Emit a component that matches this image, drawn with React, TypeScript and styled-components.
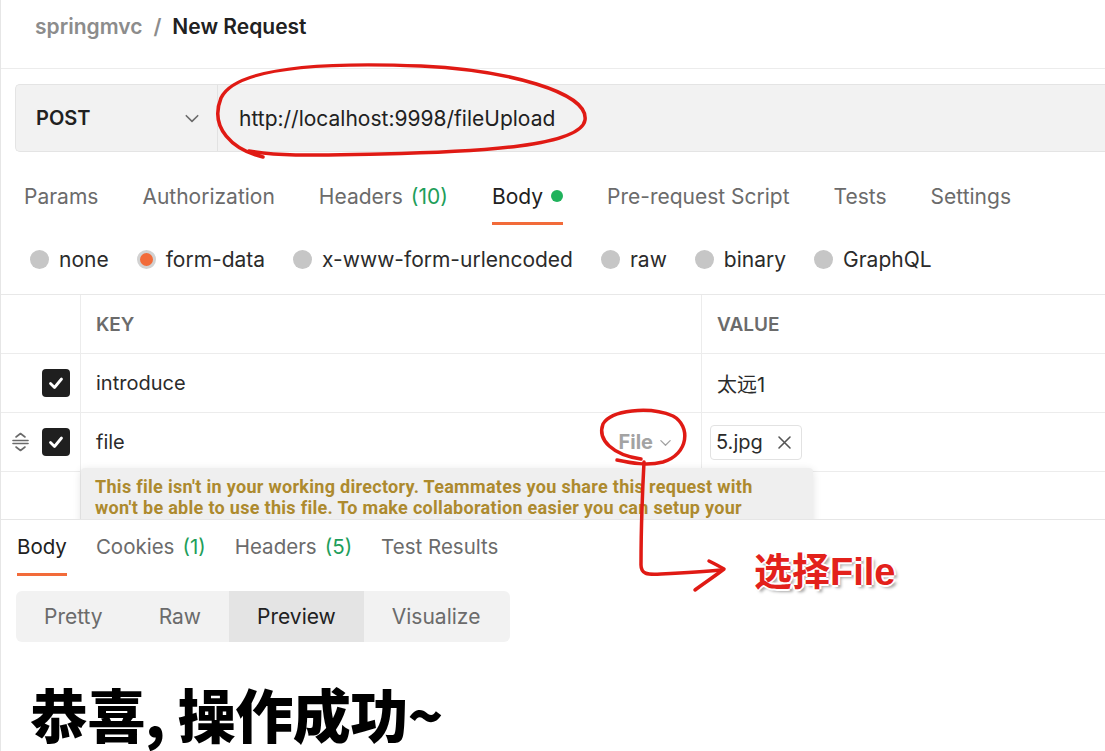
import React from 'react';
import styled, { createGlobalStyle } from 'styled-components';

const GlobalStyle = createGlobalStyle`
    html, body {
        margin: 0;
        padding: 0;
        background: #fff;
    }
    body {
        font-family: Inter, "Noto Sans", "Noto Sans CJK SC", sans-serif;
        color: #212121;
    }
`;

const Page = styled.div`
    position: relative;
    width: 1105px;
    height: 751px;
    overflow: hidden;
    border-left: 1px solid #e6e6e6;
    box-sizing: border-box;
`;

const Header = styled.div`
    height: 69px;
    box-sizing: border-box;
    padding: 13px 0 0 34px;
    border-bottom: 1px solid #ececec;
    display: flex;
    gap: 11px;
    font-size: 21px;
    font-weight: 600;
    line-height: 28px;
`;

const Crumb = styled.span<{ $dim?: boolean }>`
    color: ${p => (p.$dim ? '#8c8c8c' : '#212121')};
`;

const UrlBar = styled.div`
    margin: 15px 0 0 14px;
    height: 68px;
    box-sizing: border-box;
    background: #f2f2f2;
    border: 1px solid #e4e4e4;
    border-right: none;
    border-radius: 5px 0 0 5px;
    display: flex;
`;

const Method = styled.div`
    width: 202px;
    box-sizing: border-box;
    padding: 0 17px 0 20px;
    border-right: 1px solid #e2e2e2;
    display: flex;
    align-items: center;
    justify-content: space-between;
    font-size: 20px;
    font-weight: 600;
    color: #212121;
`;

const Url = styled.div`
    padding-left: 21px;
    display: flex;
    align-items: center;
    font-size: 21px;
    color: #212121;
`;

const TabRow = styled.div`
    margin-top: 18px;
    padding-left: 23px;
    display: flex;
    gap: 44px;
`;

const Tab = styled.div<{ $active?: boolean; $size?: number; $height?: number }>`
    height: ${p => p.$height ?? 55}px;
    box-sizing: border-box;
    display: flex;
    align-items: center;
    gap: 8px;
    font-size: ${p => p.$size ?? 21}px;
    color: ${p => (p.$active ? '#212121' : '#6b6b6b')};
    border-bottom: 3px solid ${p => (p.$active ? '#f26b3a' : 'transparent')};
`;

const Count = styled.span`
    color: #1e9e5a;
`;

const Dot = styled.span`
    width: 12px;
    height: 12px;
    border-radius: 50%;
    background: #20b25c;
`;

const RadioRow = styled.div`
    height: 69px;
    padding-left: 29px;
    display: flex;
    align-items: center;
    gap: 28px;
`;

const RadioItem = styled.label`
    display: flex;
    align-items: center;
    gap: 10px;
    font-size: 21px;
    color: #2b2b2b;
`;

const Radio = styled.span<{ $on?: boolean }>`
    width: 19px;
    height: 19px;
    border-radius: 50%;
    box-sizing: border-box;
    background: ${p => (p.$on ? '#f26b3a' : '#c6c6c6')};
    border: ${p => (p.$on ? '3px solid #d2d2d2' : 'none')};
`;

const Table = styled.div`
    height: 224px;
    overflow: hidden;
    border-top: 1px solid #e8e8e8;
`;

const Row = styled.div<{ $height?: number }>`
    position: relative;
    display: grid;
    grid-template-columns: 79px 621px 1fr;
    height: ${p => p.$height ?? 58}px;
    border-bottom: 1px solid #ececec;
`;

const Cell = styled.div<{ $first?: boolean }>`
    display: flex;
    align-items: center;
    box-sizing: border-box;
    border-left: ${p => (p.$first ? 'none' : '1px solid #ececec')};
    padding-left: 15px;
    font-size: 20px;
    color: #2b2b2b;
`;

const HandleCell = styled.div`
    display: flex;
    align-items: center;
    justify-content: space-between;
    padding: 0 10px 0 10px;
`;

const HeadCell = styled(Cell)`
    font-size: 19px;
    font-weight: 600;
    color: #6b6b6b;
`;

const KeyCell = styled(Cell)`
    justify-content: space-between;
    padding-right: 29px;
`;

const TypePick = styled.span`
    display: flex;
    align-items: center;
    gap: 6px;
    font-size: 20px;
    font-weight: 700;
    color: #a3a3a3;
`;

const Chip = styled.span`
    display: inline-flex;
    align-items: center;
    gap: 14px;
    margin-left: -7px;
    height: 33px;
    padding: 0 9px 0 5px;
    border: 1px solid #e2e2e2;
    border-radius: 4px;
    font-size: 20px;
    color: #2b2b2b;
`;

const CheckBox = styled.span`
    width: 28px;
    height: 28px;
    border-radius: 4px;
    background: #1f1f1f;
    display: flex;
    align-items: center;
    justify-content: center;
`;

const Tooltip = styled.div`
    position: absolute;
    left: 80px;
    top: 55px;
    width: 732px;
    height: 80px;
    box-sizing: border-box;
    padding: 8px 14px;
    background: #efefef;
    box-shadow: 0 2px 8px rgba(0, 0, 0, 0.12);
    border-radius: 4px;
    font-family: Roboto, "Liberation Sans", sans-serif;
    font-size: 18px;
    font-weight: 700;
    letter-spacing: 0.3px;
    line-height: 21px;
    white-space: nowrap;
    color: #ad8a2e;
    z-index: 2;
`;

const Response = styled.div`
    position: relative;
    z-index: 3;
    background: #fff;
    border-top: 1px solid #e6e6e6;
`;

const RespTabs = styled.div`
    padding-left: 16px;
    display: flex;
    gap: 29px;
`;

const Segmented = styled.div`
    margin: 15px 0 0 15px;
    width: 494px;
    height: 51px;
    border-radius: 6px;
    background: #f2f2f2;
    display: flex;
    overflow: hidden;
`;

const Segment = styled.div<{ $active?: boolean }>`
    padding: 0 28px;
    display: flex;
    align-items: center;
    font-size: 21px;
    color: ${p => (p.$active ? '#212121' : '#6b6b6b')};
    background: ${p => (p.$active ? '#e4e4e4' : 'transparent')};
`;

const Heading = styled.h1`
    margin: 41px 0 0 29px;
    font-family: "Noto Sans CJK SC", sans-serif;
    font-size: 58px;
    font-weight: 900;
    line-height: 60px;
    color: #000;
    letter-spacing: -0.5px;
`;

const Marks = styled.svg`
    position: absolute;
    left: 0;
    top: 0;
    pointer-events: none;
    z-index: 10;
`;

const Note = styled.span`
    position: absolute;
    left: 753px;
    top: 541px;
    z-index: 11;
    font-family: "Noto Sans CJK SC", "Liberation Sans", sans-serif;
    font-size: 38px;
    font-weight: 700;
    color: #e3211b;
    white-space: nowrap;
    text-shadow: -2px 0 #fff, 2px 0 #fff, 0 -2px #fff, 0 2px #fff, 3px 3px 3px rgba(0, 0, 0, 0.35);
`;

const NoteLatin = styled.span`
    font-family: "Liberation Sans", Arial, sans-serif;
    font-weight: 700;
`;

const Check = () => (
    <svg width="18" height="18" viewBox="0 0 18 18">
        <path d="M3.5 9.5 L7.5 13.5 L14.5 5" fill="none" stroke="#fff" strokeWidth="2.8" strokeLinecap="round" strokeLinejoin="round" />
    </svg>
);

const Chevron = ({ size = 14, color = '#6b6b6b' }: { size?: number; color?: string }) => (
    <svg width={size} height={size} viewBox="0 0 14 14">
        <path d="M2 5 L7 10 L12 5" fill="none" stroke={color} strokeWidth="1.4" strokeLinecap="round" strokeLinejoin="round" />
    </svg>
);

const Handle = () => (
    <svg width="19" height="22" viewBox="0 0 19 22">
        <g fill="none" stroke="#6b6b6b" strokeWidth="1.6" strokeLinecap="round" strokeLinejoin="round">
            <path d="M5 6 L9.5 2.5 L14 6" />
            <path d="M2 9.5 H17" />
            <path d="M2 12.5 H17" />
            <path d="M5 16 L9.5 19.5 L14 16" />
        </g>
    </svg>
);

const Cross = () => (
    <svg width="15" height="15" viewBox="0 0 15 15">
        <path d="M2 2 L13 13 M13 2 L2 13" stroke="#555" strokeWidth="1.6" strokeLinecap="round" />
    </svg>
);

const App: React.FC = () => {
    const tabs = ['Params', 'Authorization', 'Headers', 'Body', 'Pre-request Script', 'Tests', 'Settings'];
    const bodyTypes = ['none', 'form-data', 'x-www-form-urlencoded', 'raw', 'binary', 'GraphQL'];
    const views = ['Pretty', 'Raw', 'Preview', 'Visualize'];

    return (
        <Page>
            <GlobalStyle />
            <Header>
                <Crumb $dim>springmvc</Crumb>
                <Crumb $dim>/</Crumb>
                <Crumb>New Request</Crumb>
            </Header>

            <UrlBar>
                <Method>
                    POST
                    <Chevron size={16} />
                </Method>
                <Url>http://localhost:9998/fileUpload</Url>
            </UrlBar>

            <TabRow>
                {tabs.map(t => (
                    <Tab key={t} $active={t === 'Body'}>
                        {t}
                        {t === 'Headers' && <Count>(10)</Count>}
                        {t === 'Body' && <Dot />}
                    </Tab>
                ))}
            </TabRow>

            <RadioRow>
                {bodyTypes.map(b => (
                    <RadioItem key={b}>
                        <Radio $on={b === 'form-data'} />
                        {b}
                    </RadioItem>
                ))}
            </RadioRow>

            <Table>
                <Row>
                    <Cell $first />
                    <HeadCell>KEY</HeadCell>
                    <HeadCell>VALUE</HeadCell>
                </Row>
                <Row>
                    <HandleCell>
                        <span />
                        <CheckBox><Check /></CheckBox>
                    </HandleCell>
                    <Cell>introduce</Cell>
                    <Cell>太远1</Cell>
                </Row>
                <Row>
                    <HandleCell>
                        <Handle />
                        <CheckBox><Check /></CheckBox>
                    </HandleCell>
                    <KeyCell>
                        file
                        <TypePick>File<Chevron size={13} color="#a3a3a3" /></TypePick>
                    </KeyCell>
                    <Cell>
                        <Chip>5.jpg<Cross /></Chip>
                    </Cell>
                    <Tooltip>
                        This file isn't in your working directory. Teammates you share this request with
                        <br />
                        won't be able to use this file. To make collaboration easier you can setup your
                    </Tooltip>
                </Row>
                <Row $height={50}>
                    <HandleCell />
                    <Cell />
                    <Cell />
                </Row>
            </Table>

            <Response>
                <RespTabs>
                    <Tab $active $size={20.5} $height={56}>Body</Tab>
                    <Tab $size={20.5} $height={56}>Cookies<Count>(1)</Count></Tab>
                    <Tab $size={20.5} $height={56}>Headers<Count>(5)</Count></Tab>
                    <Tab $size={20.5} $height={56}>Test Results</Tab>
                </RespTabs>
                <Segmented>
                    {views.map(v => (
                        <Segment key={v} $active={v === 'Preview'}>{v}</Segment>
                    ))}
                </Segmented>
                <Heading>恭喜, 操作成功~</Heading>
            </Response>

            <Marks width="1105" height="751" viewBox="0 0 1105 751">
                <g fill="none" stroke="#e01a14" strokeWidth="3.5" strokeLinecap="round" strokeLinejoin="round">
                    <path d="M262 157 C232 150 208 128 220 98 C234 68 320 62 420 66 C505 70 588 92 584 120 C580 146 480 152 380 154 C320 155 282 157 248 151" />
                    <path d="M640 459 C612 455 596 440 602 424 C610 410 648 406 672 416 C690 426 688 454 662 462 C646 466 630 463 616 460" />
                    <path d="M643 462 C641 500 640 535 640 565 C640 574 646 575 660 574 C680 573 700 572 720 570" />
                    <path d="M708 561 C714 564 718 566 723 569 C714 576 702 584 694 590" />
                </g>
            </Marks>
            <Note>选择<NoteLatin>File</NoteLatin></Note>
        </Page>
    );
};

export default App;
